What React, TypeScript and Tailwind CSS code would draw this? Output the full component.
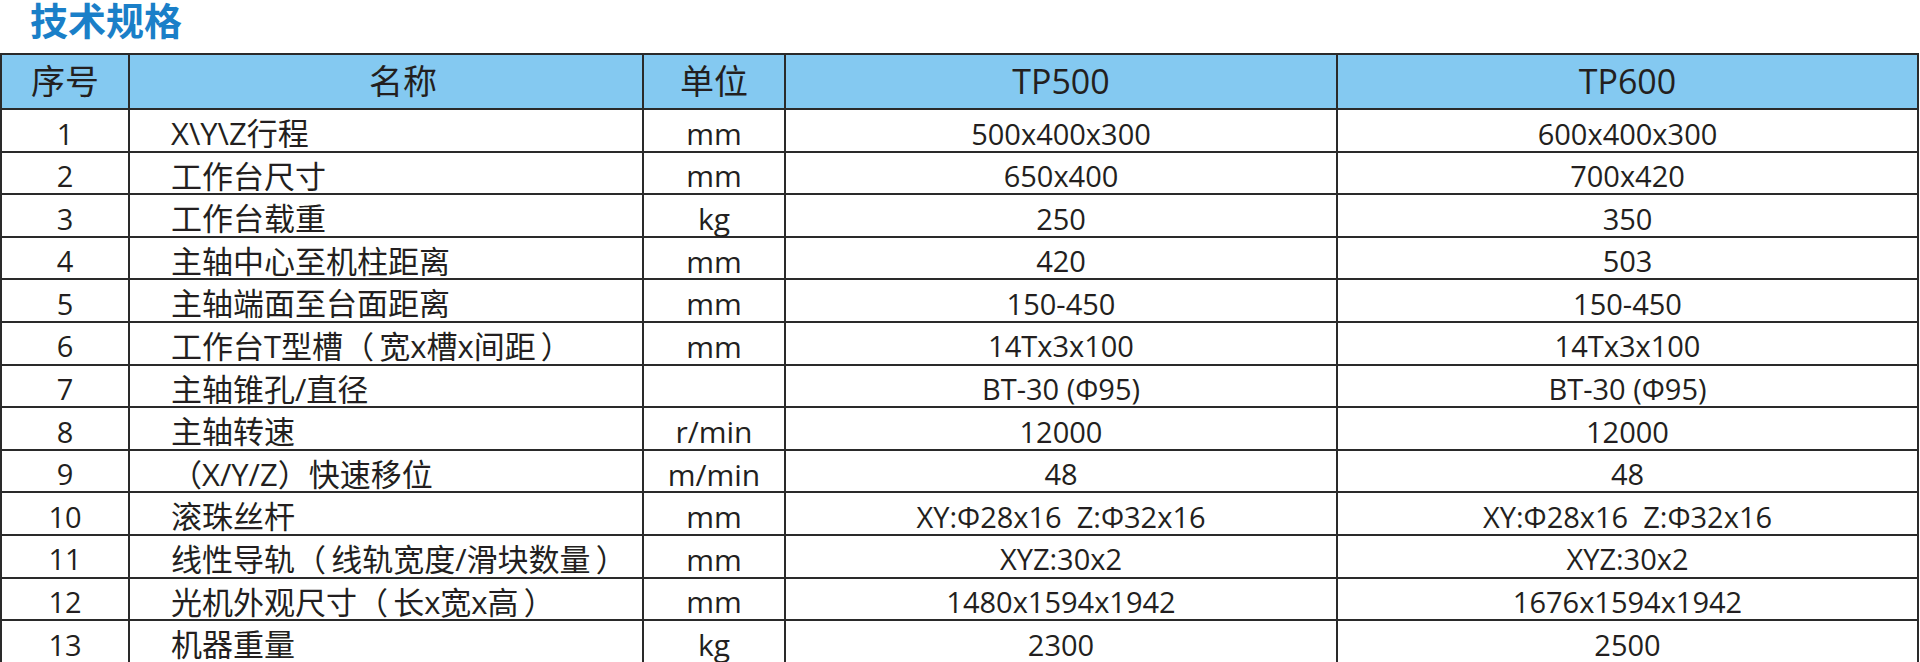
const rows = [
  ['1', 'X\\Y\\Z行程', 'mm', '500x400x300', '600x400x300'],
  ['2', '工作台尺寸', 'mm', '650x400', '700x420'],
  ['3', '工作台载重', 'kg', '250', '350'],
  ['4', '主轴中心至机柱距离', 'mm', '420', '503'],
  ['5', '主轴端面至台面距离', 'mm', '150-450', '150-450'],
  ['6', '工作台T型槽（\u2009宽x槽x间距\u2009）', 'mm', '14Tx3x100', '14Tx3x100'],
  ['7', '主轴锥孔/直径', '', 'BT-30 (Φ95)', 'BT-30 (Φ95)'],
  ['8', '主轴转速', 'r/min', '12000', '12000'],
  ['9', '（X/Y/Z）快速移位', 'm/min', '48', '48'],
  ['10', '滚珠丝杆', 'mm', 'XY:Φ28x16  Z:Φ32x16', 'XY:Φ28x16  Z:Φ32x16'],
  ['11', '线性导轨（\u2009线轨宽度/滑块数量\u2009）', 'mm', 'XYZ:30x2', 'XYZ:30x2'],
  ['12', '光机外观尺寸（\u2009长x宽x高\u2009）', 'mm', '1480x1594x1942', '1676x1594x1942'],
  ['13', '机器重量', 'kg', '2300', '2500'],
];

const cols = 'grid grid-cols-[128px_514px_142px_552px_1fr]';
const font = { fontFamily: '"Open Sans", "Noto Sans CJK SC", sans-serif' };

export default function App() {
  return (
    <div className="w-[1920px] h-[662px] overflow-hidden bg-white text-[#231f20]" style={font}>
      <div className="h-[53px] pl-[30px]">
        <h2 className="text-[38px] leading-[40px] font-bold text-[#1a7fc8]">技术规格</h2>
      </div>

      <div className="w-[1919px] border-t-2 border-l-2 border-r-2 border-[#2a2a2a]">
        <div className={`${cols} h-[55px] bg-[#84c9f1] border-b-2 border-[#2a2a2a] text-[34px]`}>
          <div className="flex items-center justify-center border-r-2 border-[#2a2a2a]">序号</div>
          <div className="flex items-center justify-center pl-[34px] border-r-2 border-[#2a2a2a]">名称</div>
          <div className="flex items-center justify-center border-r-2 border-[#2a2a2a]">单位</div>
          <div className="flex items-center justify-center border-r-2 border-[#2a2a2a]">TP500</div>
          <div className="flex items-center justify-center">TP600</div>
        </div>

        {rows.map((r) => (
          <div key={r[0]} className={`${cols} h-[42.6px] border-b-2 border-[#2a2a2a] text-[29px]`}>
            <div className="flex items-center justify-center border-r-2 border-[#2a2a2a]">{r[0]}</div>
            <div className="flex items-center pl-[41px] border-r-2 border-[#2a2a2a] whitespace-nowrap text-[31px]">{r[1]}</div>
            <div className="flex items-center justify-center border-r-2 border-[#2a2a2a] text-[30px]">{r[2]}</div>
            <div className="flex items-center justify-center border-r-2 border-[#2a2a2a] whitespace-pre">{r[3]}</div>
            <div className="flex items-center justify-center whitespace-pre">{r[4]}</div>
          </div>
        ))}
      </div>
    </div>
  );
}
